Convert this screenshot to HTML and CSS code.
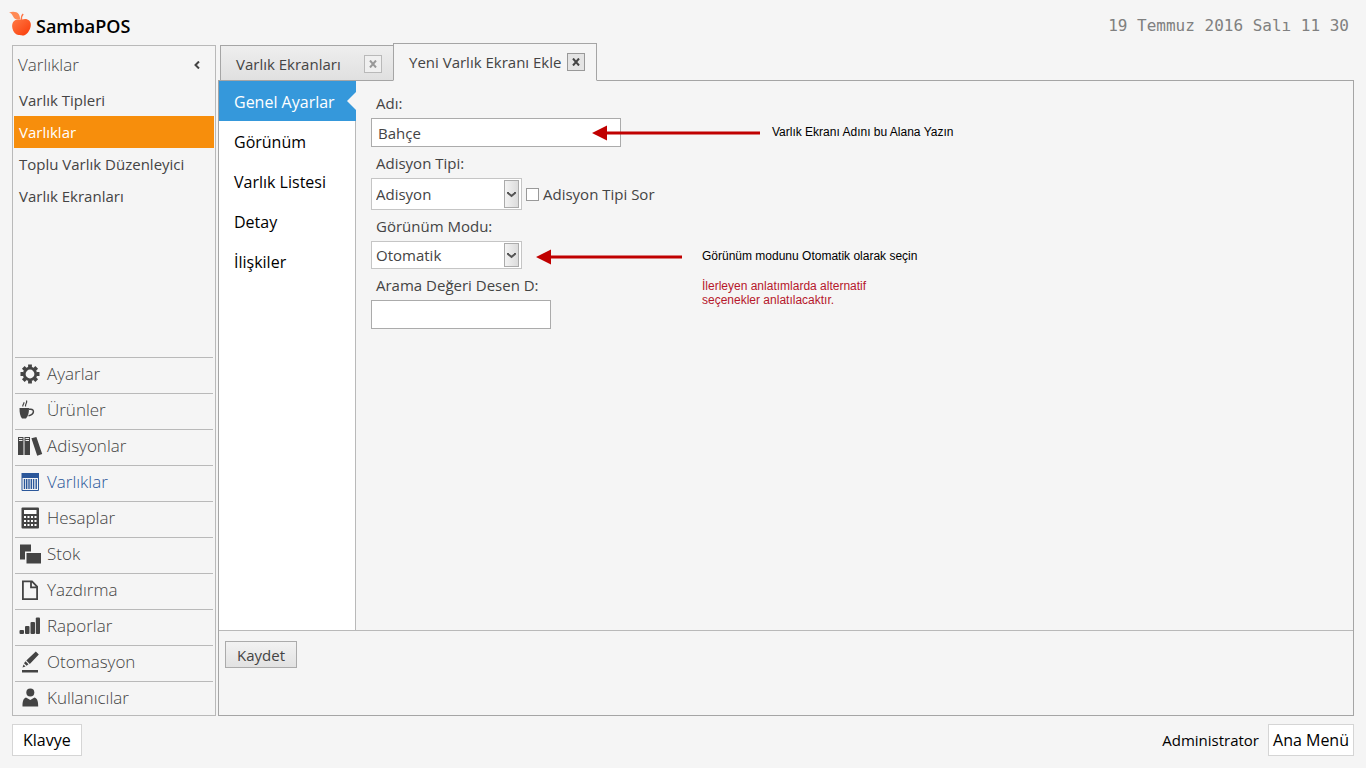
FILE: index.html
```html
<!DOCTYPE html>
<html lang="tr">
<head>
<meta charset="utf-8">
<title>SambaPOS</title>
<link rel="stylesheet" href="styles.css">
</head>
<body>
<header class="topbar">
  <div class="brand">
    <svg class="brand-logo" width="24" height="26" viewBox="0 0 24 26" aria-hidden="true">
      <defs><linearGradient id="apple" x1="0" y1="0" x2="1" y2="1"><stop offset="0" stop-color="#ff7a45"/><stop offset="1" stop-color="#fa3a08"/></linearGradient></defs>
      <path fill="url(#apple)" d="M13 8.500c2.500-1 5.500-.8 7.200 1 2.200 2.200 2 6 .4 9.200-1.500 3-4 5.800-6.600 5.800-1.300 0-1.900-.5-3-.6-1.400-.1-2.400.2-3.800-.6C4.700 21.800 3.100 18 3.100 15c0-2.700 1.300-5 3.400-6 2-.8 4.400-.6 6.500-.5z"/>
      <path fill="#ff8a55" d="M0 1.500c3.500-1.200 8-1 9.800 1.800 1 1.500 1 3.200 1.500 4.700-3.200 1.500-6.300 0-7.300-2.700C3.200 3.200 2 2 0 1.500z"/>
      <path fill="none" stroke="#ff7545" stroke-width="1.300" d="M12.500 9c-.4-2.500.2-4.500 1.700-6"/>
    </svg>
    <span class="brand-name">SambaPOS</span>
  </div>
  <time class="clock">19 Temmuz 2016 Salı 11 30</time>
</header>

<main class="workspace">
  <nav class="sidebar">
    <div class="sidebar-head">
      <span>Varlıklar</span>
      <button class="collapse" type="button" aria-label="Daralt"><svg width="8" height="8" viewBox="0 0 8 8"><path d="M6 .5 2.500 4 6 7.500" fill="none" stroke="#444" stroke-width="2"/></svg></button>
    </div>
    <a class="page-link" href="#">Varlık Tipleri</a>
    <a class="page-link selected" href="#">Varlıklar</a>
    <a class="page-link" href="#">Toplu Varlık Düzenleyici</a>
    <a class="page-link" href="#">Varlık Ekranları</a>

    <div class="modules">
      <a class="module" href="#"><svg class="icon" viewBox="0 0 26 24"><circle cx="13" cy="12" r="5.800" fill="none" stroke="#444" stroke-width="2.800"/><g stroke="#444" stroke-width="3.800"><path d="M13 2.500v3M13 18.500v3M3.500 12h3M19.500 12h3M6.300 5.300l2 2M17.700 16.700l2 2M19.700 5.300l-2 2M8.300 16.700l-2 2"/></g></svg>Ayarlar</a>
      <a class="module" href="#"><svg class="icon" viewBox="0 0 26 24"><path fill="#444" d="M2.500 10H12c0 5-.8 8-3 10.500H5C3 18 2.500 14.500 2.500 10z"/><path fill="none" stroke="#444" stroke-width="1.500" d="M12 11.200h1.800c1.800 0 2.800 1 2.600 2.700-.2 2-2 3.200-4.900 4"/><path fill="none" stroke="#444" stroke-width="1.200" d="M6 8.500c-1-2 1.500-2.300.8-4.300M8.700 8.500c-1.200-2.500 2-3 .8-6"/></svg>Ürünler</a>
      <a class="module" href="#"><svg class="icon" viewBox="0 0 26 24"><path fill="#444" d="M1 3h5.500v18H1zM7.500 3H13v18H7.500zM14.400 4.300l5-1.300 5.800 17-5 1.700z"/><path stroke="#eee" d="M2 4.500h3.500M2 6.500h3.500M8.500 4.500H12M8.500 6.500H12"/></svg>Adisyonlar</a>
      <a class="module current" href="#"><svg class="icon" viewBox="0 0 26 24"><path fill="#2b579a" d="M4.500 3H22v5H4.500z"/><path fill="none" stroke="#2b579a" d="M5 8v12.500h16.500V8"/><path fill="none" stroke="#2b579a" stroke-width="1.400" d="M7.500 9v10M9.700 9v10M12 9v10M14.300 9v10M16.600 9v10M19.200 9v10"/></svg>Varlıklar</a>
      <a class="module" href="#"><svg class="icon" viewBox="0 0 26 24"><rect x="4.500" y="1.500" width="17.500" height="21" rx="1" fill="#444"/><path fill="#fff" d="M7 4h12.500v4H7zM7 10h2v2H7zM10.500 10h2v2h-2zM14 10h2v2h-2zM17.500 10h2v2h-2zM7 14h2v2H7zM10.500 14h2v2h-2zM14 14h2v2h-2zM17.500 14h2v2h-2zM7 18h2v2H7zM10.500 18h2v2h-2zM14 18h2v2h-2zM17.500 18h2v2h-2z"/></svg>Hesaplar</a>
      <a class="module" href="#"><svg class="icon" viewBox="0 0 26 24"><path fill="#444" d="M3 2.500h11v7H8v8H3zM9.500 11H24v10.500H9.500z"/></svg>Stok</a>
      <a class="module" href="#"><svg class="icon" viewBox="0 0 26 24"><path fill="none" stroke="#444" stroke-width="1.800" d="M5.900 3.400H15l5.100 5.100v12.600H5.900zM14 3.400v6h6"/></svg>Yazdırma</a>
      <a class="module" href="#"><svg class="icon" viewBox="0 0 26 24"><g fill="#444"><rect x="2.500" y="16" width="4.500" height="4" rx="1"/><rect x="8" y="12" width="4.500" height="8" rx="1"/><rect x="13.500" y="8" width="4.500" height="12" rx="1"/><rect x="18.800" y="3.500" width="4.200" height="16.500" rx="1"/></g></svg>Raporlar</a>
      <a class="module" href="#"><svg class="icon" viewBox="0 0 26 24"><path fill="#444" d="M5 20h16v2.500H5zM18.800 1.500l3 3-9 9.500-3.500-3.500zM8.500 11.300l3 3-1.900 1.500-2.600-2.600zM6.500 14.500l2 2-3 1z"/></svg>Otomasyon</a>
      <a class="module" href="#"><svg class="icon" viewBox="0 0 26 24"><circle cx="13.300" cy="6.500" r="4" fill="#444"/><path fill="#444" d="M5.500 20.500c0-4.500.5-8 3.500-9l4.300 2.500 4.200-2.500c3.200 1 3.700 4.500 3.700 9z"/></svg>Kullanıcılar</a>
    </div>
  </nav>

  <section class="document">
    <div class="tabs">
      <div class="tab"><span>Varlık Ekranları</span><button class="close" type="button" aria-label="Kapat"><svg width="8" height="8" viewBox="0 0 8 8"><path d="M1 .5l6 7M7 .5l-6 7"/></svg></button></div>
      <div class="tab active"><span>Yeni Varlık Ekranı Ekle</span><button class="close" type="button" aria-label="Kapat"><svg width="8" height="8" viewBox="0 0 8 8"><path d="M1 .5l6 7M7 .5l-6 7"/></svg></button></div>
    </div>
    <div class="panel">
      <div class="editor">
        <nav class="sections">
          <a class="section current" href="#">Genel Ayarlar</a>
          <a class="section" href="#">Görünüm</a>
          <a class="section" href="#">Varlık Listesi</a>
          <a class="section" href="#">Detay</a>
          <a class="section" href="#">İlişkiler</a>
        </nav>
        <form class="form">
          <label class="label" for="name">Adı:</label>
          <input class="text wide" id="name" type="text" value="Bahçe">
          <label class="label" for="type">Adisyon Tipi:</label>
          <div class="line">
            <div class="picker tall"><select id="type"><option>Adisyon</option></select><span class="drop"><svg width="9" height="7" viewBox="0 0 9 7"><path d="M1 1v1l3.500 3L8 2V1"/></svg></span></div>
            <input class="check" id="ask" type="checkbox"><label for="ask">Adisyon Tipi Sor</label>
          </div>
          <label class="label" for="mode">Görünüm Modu:</label>
          <div class="picker"><select id="mode"><option>Otomatik</option></select><span class="drop"><svg width="9" height="7" viewBox="0 0 9 7"><path d="M1 1v1l3.500 3L8 2V1"/></svg></span></div>
          <label class="label" for="pattern">Arama Değeri Desen D:</label>
          <input class="text" id="pattern" type="text">

          <div class="note note-name">
            <svg width="168" height="16" viewBox="0 0 168 16"><path fill="#c00000" d="M0 8 15 .5v6h153v3H15v6z"/></svg>
            <p>Varlık Ekranı Adını bu Alana Yazın</p>
          </div>
          <div class="note note-mode">
            <svg width="146" height="16" viewBox="0 0 146 16"><path fill="#c00000" d="M0 8 15 .5v6h131v3H15v6z"/></svg>
            <div>
              <p>Görünüm modunu Otomatik olarak seçin</p>
              <p class="hint">İlerleyen anlatımlarda alternatif<br>seçenekler anlatılacaktır.</p>
            </div>
          </div>
        </form>
      </div>
      <div class="actions"><button class="save" type="button">Kaydet</button></div>
    </div>
  </section>
</main>

<footer class="bottombar">
  <button class="flat keyboard" type="button">Klavye</button>
  <span class="user">Administrator</span>
  <button class="flat" type="button">Ana Menü</button>
</footer>
</body>
</html>
```
FILE: styles.css
```css
* { box-sizing: border-box; }

body {
  margin: 0;
  min-height: 100vh;
  display: flex;
  flex-direction: column;
  padding: 0 12px 12px;
  background: #f5f5f5;
  color: #444;
  font: 15px/20px "Open Sans", "Noto Sans", sans-serif;
}

a { color: inherit; text-decoration: none; }
button, input, select { font: inherit; color: inherit; }
p { margin: 0; }

.topbar {
  display: flex;
  justify-content: space-between;
  height: 43px;
}
.brand { display: flex; margin-left: -3px; padding-top: 11px; }
.brand-name {
  padding: 5px 0 0 3px;
  color: #000;
  font-size: 18px;
  font-weight: 600;
}
.clock {
  padding: 16px 5px 0 0;
  color: #808080;
  font: 16px/20px "DejaVu Sans Mono", monospace;
}

.workspace { flex: 1; display: flex; gap: 2px; }

.sidebar {
  display: flex;
  flex-direction: column;
  flex: 0 0 204px;
  margin-top: 2px;
  padding: 0 1px;
  border: 1px solid #b9b9b9;
}
.sidebar-head {
  display: flex;
  align-items: center;
  justify-content: space-between;
  height: 38px;
  padding: 0 9px 0 4px;
  font-size: 17px;
  font-weight: 300;
}
.collapse {
  display: flex;
  padding: 4px;
  border: 0;
  background: none;
}
.page-link { padding: 6px 5px; }
.page-link.selected { background: #f78e0c; color: #fff; }

.modules { margin: auto 0 0; }
.module {
  display: flex;
  align-items: center;
  gap: 4px;
  height: 36px;
  margin: 0 1px;
  padding: 0 2px 4px;
  border-top: 1px solid #b9b9b9;
  font-size: 17px;
  font-weight: 300;
}
.module:last-child { height: 34px; padding-bottom: 2px; }
.module.current { color: #2b579a; }
.icon { width: 26px; height: 24px; }

.document {
  flex: 1;
  display: flex;
  flex-direction: column;
  min-width: 0;
}
.tabs {
  display: flex;
  align-items: flex-end;
  height: 38px;
  margin: 0 0 -1px 2px;
}
.tab {
  display: flex;
  align-items: center;
  justify-content: space-between;
  gap: 4px;
  width: 173px;
  height: 36px;
  padding: 2px 11px 0 15px;
  border: 1px solid #a5a5a5;
  border-right: 0;
  background: linear-gradient(#eee, #e0e0e0);
  white-space: nowrap;
}
.tab.active {
  position: relative;
  width: 204px;
  height: 38px;
  padding: 0 11px 0 15px;
  border-right: 1px solid #a5a5a5;
  border-bottom-color: #f5f5f5;
  background: #f5f5f5;
}
.close {
  display: grid;
  place-items: center;
  flex: none;
  width: 18px;
  height: 18px;
  padding: 0;
  border: 1px solid #b9b9b9;
  background: #f0f0f0;
}
.close path { fill: none; stroke: #999; stroke-width: 2; }
.active .close { border-color: #999; background: #e4e4e4; }
.active .close path { stroke: #444; }

.panel {
  flex: 1;
  display: flex;
  flex-direction: column;
  border: 1px solid #a5a5a5;
}
.editor { flex: 1; display: flex; }
.sections {
  flex: 0 0 137px;
  border-right: 1px solid #b9b9b9;
  background: #fff;
  color: #000;
  font-size: 16px;
}
.section { display: block; padding: 11px 15px 9px; white-space: nowrap; }
.section.current {
  position: relative;
  margin-right: -1px;
  background: #3598db;
  color: #fff;
}
.section.current::after {
  content: "";
  position: absolute;
  top: 11px;
  right: 0;
  border: solid transparent;
  border-width: 9px 9px 9px 0;
  border-right-color: #f5f5f5;
}

.form { position: relative; flex: 1; padding: 6px 15px; }
.label { display: block; padding: 6px 5px 5px; }
.text {
  display: block;
  width: 180px;
  height: 29px;
  padding: 0 6px;
  border: 1px solid #ababab;
  background: #fff;
}
.text.wide { width: 250px; }
.line { display: flex; align-items: center; }
.picker {
  position: relative;
  width: 151px;
  height: 28px;
  border: 1px solid #c5c5c5;
  background: #fff;
}
.picker.tall { height: 32px; }
.picker select {
  width: 100%;
  height: 100%;
  padding: 0 20px 0 4px;
  border: 0;
  background: none;
  appearance: none;
}
.drop {
  position: absolute;
  top: 1px;
  right: 2px;
  bottom: 1px;
  display: grid;
  place-items: center;
  width: 15px;
  border: 1px solid #ababab;
  background: linear-gradient(90deg, #f3f3f3, #dcdcdc);
  pointer-events: none;
}
.drop path { fill: none; stroke: #555; stroke-width: 2; }
.check {
  appearance: none;
  width: 13px;
  height: 13px;
  margin: 0 4px;
  border: 1px solid #999;
  background: #fff;
}
.check:checked { background: #3598db; }

/* Callouts pointing at the form fields */
.note {
  position: absolute;
  display: flex;
  color: #000;
  font: 12px/14px "Liberation Sans", sans-serif;
  white-space: nowrap;
}
.note-name { top: 44px; left: 236px; gap: 12px; }
.note-mode { top: 168px; left: 180px; gap: 20px; }
.hint { padding-top: 16px; color: #b5172b; }

.actions { height: 85px; padding: 10px 6px; border-top: 1px solid #b9b9b9; }
.save {
  height: 27px;
  padding: 0 11px;
  border: 1px solid #ababab;
  background: linear-gradient(#f2f2f2, #e2e2e2);
}

.bottombar {
  display: flex;
  align-items: center;
  margin-top: 8px;
  color: #000;
}
.flat {
  height: 32px;
  padding: 0 4px;
  border: 1px solid #d5d5d5;
  background: #fff;
  font-size: 16px;
}
.keyboard { padding: 0 10px; margin-right: auto; }
.user { margin-right: 9px; }
```
